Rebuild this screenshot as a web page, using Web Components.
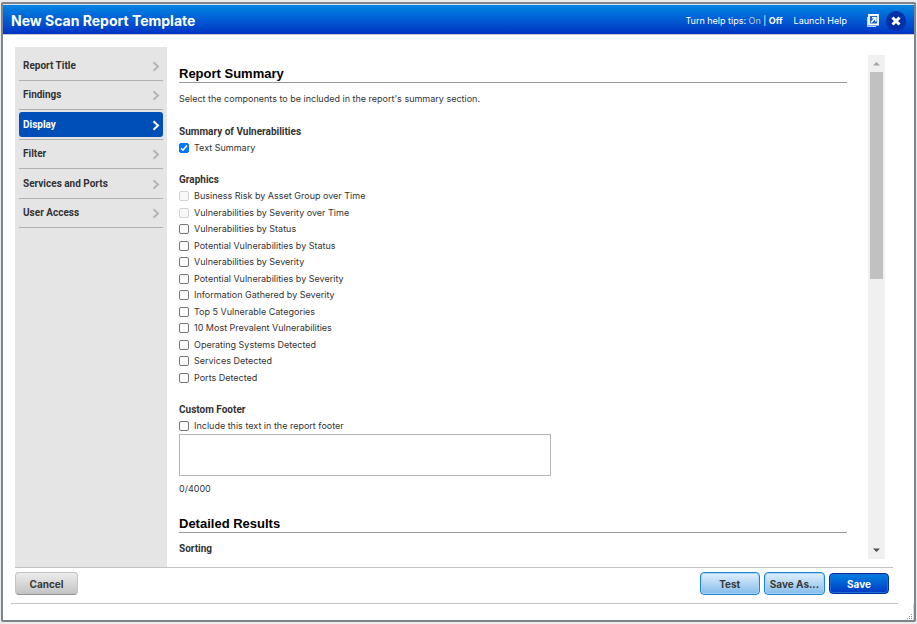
<!DOCTYPE html>
<html lang="en">
<head>
<meta charset="utf-8">
<title>New Scan Report Template</title>
<style>
html, body { height: 100%; }
body { margin: 0; background: #f1f1f1; font: 9px/12px Inter, "Liberation Sans", sans-serif; color: #333; overflow: hidden; }
</style>
</head>
<body>
<template id="tpl-dialog">
<style>
:host { box-sizing: border-box; display: block; height: 100vh; padding: 2px 1px 2px 1px; background: #ececec; }
.frame { box-sizing: border-box; height: 100%; border: 2px solid #7d848a; display: flex; flex-direction: column; background: #fff; border-radius: 2px; }
.body { flex: 1; min-height: 0; display: flex; margin: 12px 21px 0 12px; border-bottom: 1px solid #c3c3c3; }
nav { box-sizing: border-box; flex: none; width: 152px; background: #e5e5e5; padding: 4px; }
.items { display: grid; grid-auto-rows: 1fr; height: 177px; }
.footer { flex: none; display: flex; align-items: center; gap: 4px; margin: 0 16px 0 8px; padding: 4px 9px 8px 4px; border-bottom: 1px solid #c3c3c3; }
.gap { flex: 1; }
.grip { flex: none; height: 16px; display: flex; justify-content: flex-end; align-items: flex-end; border-right: 1px solid #cfdde6; }
main { flex: 1; min-width: 0; display: flex; padding: 8px 8px 8px 12px; }
</style>
<div class="frame">
  <slot name="header"></slot>
  <div class="body">
    <nav aria-label="Sections"><div class="items"><slot name="nav"></slot></div></nav>
    <main><slot></slot></main>
  </div>
  <div class="footer"><slot name="left"></slot><span class="gap"></span><slot name="right"></slot></div>
  <div class="grip"><svg width="6" height="6" viewBox="0 0 6 6" fill="#999"><path d="M4 0h1v1h-1zM2 2h1v1h-1zM4 2h1v1h-1zM0 4h1v1h-1zM2 4h1v1h-1zM4 4h1v1h-1z"/></svg></div>
</div>
</template>

<template id="tpl-header">
<style>
:host { box-sizing: border-box; flex: none; display: flex; align-items: center; height: 31px; padding: 2px 8px 0 8px; color: #fff; background: linear-gradient(#0086e2, #0034c4); border-top: 1px solid #d5e0ea; border-bottom: 1px solid #c8c8c8; }
h1 { margin: 0; flex: 1; font: bold 14px/20px Inter, "Liberation Sans", sans-serif; }
a { color: #fff; text-decoration: none; }
a.on { color: #bcc8d8; }
.launch { margin-left: 11px; }
button { border: 0; background: none; padding: 0; display: block; }
.pop { margin: 0 7px 0 20px; }
svg { display: block; }
</style>
<h1><slot></slot></h1>
<span>Turn help tips: <a class="on" href="#on">On</a> | <a href="#off"><b>Off</b></a></span>
<a class="launch" href="#help">Launch Help</a>
<button class="pop" aria-label="Open in new window"><svg width="12" height="13" viewBox="0 0 12 13" fill="none"><path d="M.5 3v9.500H9" stroke="#b9d3f3"/><path d="M2 1h9v9.500H2z" fill="#1e63cc" stroke="#fff" stroke-width="1.800"/><path d="M4 8.500L8 4.500M5 3.700h3.800V7.500" stroke="#fff" stroke-width="1.500"/></svg></button>
<button aria-label="Close"><svg width="20" height="20" viewBox="0 0 20 20"><circle cx="10" cy="10" r="10" fill="#0230a8"/><path d="M6.500 6.500l7 7M13.500 6.500l-7 7" stroke="#fff" stroke-width="3"/></svg></button>
</template>

<template id="tpl-nav">
<style>
:host { display: flex; padding-top: 2px; border-bottom: 1px solid #b0b0b0; }
a { flex: 1; display: flex; align-items: center; justify-content: space-between; margin-bottom: 2px; padding: 1px 3px 0 4px; border-radius: 3px; color: #333; text-decoration: none; font: bold 10px/14px Roboto, "Liberation Sans", sans-serif; }
svg { margin-top: 1px; stroke: #b5b5b5; }
:host([current]) a { background: #004fb8; color: #fff; }
:host([current]) svg { stroke: #fff; }
</style>
<a href="#section"><slot></slot><svg width="8" height="11" viewBox="0 0 8 11" fill="none" stroke-width="2"><path d="M1.500 1.200L6 5.500L1.500 9.800"/></svg></a>
</template>

<template id="tpl-scroll">
<style>
:host { flex: 1; min-width: 0; display: flex; gap: 21px; }
.view { flex: 1; min-width: 0; overflow: hidden; }
.bar { flex: none; width: 17px; display: grid; grid-template-rows: 17px 1fr 17px; background: #f0f0f0; justify-items: center; align-items: center; }
.track { align-self: stretch; display: grid; grid-template-rows: 44fr 56fr; width: 13px; }
.thumb { background: #c1c1c1; }
</style>
<div class="view"><slot></slot></div>
<div class="bar" aria-hidden="true">
  <svg width="9" height="5" viewBox="0 0 9 5"><path d="M1 4.500L4.500 1L8 4.500z" fill="#a3a3a3"/></svg>
  <div class="track"><div class="thumb"></div></div>
  <svg width="9" height="5" viewBox="0 0 9 5"><path d="M1 .5L4.500 4L8 .5z" fill="#505050"/></svg>
</div>
</template>

<template id="tpl-section">
<style>
:host { display: block; padding-top: 10px; }
h2 { margin: 0; color: #000; font: bold 13px/17px "Liberation Sans", sans-serif; border-bottom: 1px solid #999; }
</style>
<h2></h2><slot></slot>
</template>

<template id="tpl-group">
<style>
:host { display: block; margin-bottom: 16px; }
:host(:last-child) { margin-bottom: 10px; }
h3 { margin: 0; color: #333; font: bold 10px/16px Roboto, "Liberation Sans", sans-serif; }
:host([rows]) .rows { display: grid; grid-auto-rows: 1fr; height: 198px; }
</style>
<h3></h3><div class="rows"><slot></slot></div>
</template>

<template id="tpl-check">
<style>
:host { display: flex; align-items: center; min-height: 16px; }
label { display: flex; align-items: center; gap: 5px; }
input { appearance: none; box-sizing: border-box; width: 10px; height: 10px; margin: 0; border: 1px solid #767676; border-radius: 2px; background: #fff; }
input:disabled { border-color: #d2d2d2; background: #f8f8f8; }
input:checked { border-color: #0075ff; background: #0075ff; }
.box { display: grid; }
.box > * { grid-area: 1 / 1; }
svg { display: none; pointer-events: none; }
input:checked + svg { display: block; }
</style>
<label><span class="box"><input type="checkbox"><svg width="10" height="10" viewBox="0 0 10 10" fill="none" stroke="#fff" stroke-width="1.600"><path d="M2 5.200L4 7.200L8 2.600"/></svg></span><slot></slot></label>
</template>

<template id="tpl-footer-text">
<style>
:host { display: block; }
textarea { display: block; box-sizing: border-box; width: 372px; max-width: 100%; height: 42px; resize: none; border: 1px solid #b5b5b5; padding: 2px; font: inherit; }
output { display: block; margin-top: 7px; }
</style>
<textarea aria-label="Report footer text" maxlength="4000"></textarea>
<output>0/4000</output>
</template>

<template id="tpl-button">
<style>
:host { display: block; }
button { box-sizing: border-box; display: block; min-width: 60px; height: 23px; margin: 0; padding: 0 5px; border: 1px solid #1d86d0; border-radius: 4px; color: #3a3a3a; background: linear-gradient(#e2f0fc, #83bcec); font: bold 10px/14px Inter, "Liberation Sans", sans-serif; box-shadow: inset 0 0 0 1px #a9d3f4; }
:host([kind="plain"]) button { min-width: 63px; border-color: #c3c3c3; border-bottom-color: #949494; background: linear-gradient(#ececec, #c3c3c3); box-shadow: none; }
:host([kind="primary"]) button { height: 21px; border-color: #032e9c; color: #fff; background: linear-gradient(#0081df, #0038c6); box-shadow: inset 0 0 0 1px #1c6fda; }
</style>
<button type="button"><slot></slot></button>
</template>

<scan-dialog>
  <dialog-header slot="header">New Scan Report Template</dialog-header>
  <nav-item slot="nav">Report Title</nav-item>
  <nav-item slot="nav">Findings</nav-item>
  <nav-item slot="nav" current>Display</nav-item>
  <nav-item slot="nav">Filter</nav-item>
  <nav-item slot="nav">Services and Ports</nav-item>
  <nav-item slot="nav">User Access</nav-item>
  <scroll-pane>
    <report-section heading="Report Summary">
      <p style="margin:10px 0 19px">Select the components to be included in the report's summary section.</p>
      <option-group heading="Summary of Vulnerabilities"><check-row checked>Text Summary</check-row></option-group>
      <option-group heading="Graphics" rows>
        <check-row disabled>Business Risk by Asset Group over Time</check-row>
        <check-row disabled>Vulnerabilities by Severity over Time</check-row>
        <check-row>Vulnerabilities by Status</check-row>
        <check-row>Potential Vulnerabilities by Status</check-row>
        <check-row>Vulnerabilities by Severity</check-row>
        <check-row>Potential Vulnerabilities by Severity</check-row>
        <check-row>Information Gathered by Severity</check-row>
        <check-row>Top 5 Vulnerable Categories</check-row>
        <check-row>10 Most Prevalent Vulnerabilities</check-row>
        <check-row>Operating Systems Detected</check-row>
        <check-row>Services Detected</check-row>
        <check-row>Ports Detected</check-row>
      </option-group>
      <option-group heading="Custom Footer">
        <check-row>Include this text in the report footer</check-row>
        <footer-text></footer-text>
      </option-group>
    </report-section>
    <report-section heading="Detailed Results">
      <option-group heading="Sorting" style="margin-top:8px"></option-group>
    </report-section>
  </scroll-pane>
  <push-button slot="left" kind="plain">Cancel</push-button>
  <push-button slot="right">Test</push-button>
  <push-button slot="right">Save As...</push-button>
  <push-button slot="right" kind="primary">Save</push-button>
</scan-dialog>

<script>
class TemplateElement extends HTMLElement {
  connectedCallback() {
    if (this.shadowRoot) return;
    const root = this.attachShadow({ mode: 'open' });
    root.append(document.getElementById(this.constructor.template).content.cloneNode(true));
    this.setup(root);
  }
  setup() {}
}
class HeadedElement extends TemplateElement {
  setup(root) { root.querySelector('h2, h3').textContent = this.getAttribute('heading'); }
}
customElements.define('scan-dialog', class extends TemplateElement { static template = 'tpl-dialog'; });
customElements.define('dialog-header', class extends TemplateElement { static template = 'tpl-header'; });
customElements.define('nav-item', class extends TemplateElement { static template = 'tpl-nav'; });
customElements.define('scroll-pane', class extends TemplateElement { static template = 'tpl-scroll'; });
customElements.define('report-section', class extends HeadedElement { static template = 'tpl-section'; });
customElements.define('option-group', class extends HeadedElement { static template = 'tpl-group'; });
customElements.define('footer-text', class extends TemplateElement {
  static template = 'tpl-footer-text';
  setup(root) {
    const area = root.querySelector('textarea');
    area.addEventListener('input', () => { root.querySelector('output').textContent = area.value.length + '/4000'; });
  }
});
customElements.define('check-row', class extends TemplateElement {
  static template = 'tpl-check';
  setup(root) {
    const input = root.querySelector('input');
    input.checked = this.hasAttribute('checked');
    input.disabled = this.hasAttribute('disabled');
  }
});
customElements.define('push-button', class extends TemplateElement { static template = 'tpl-button'; });
</script>
</body>
</html>
